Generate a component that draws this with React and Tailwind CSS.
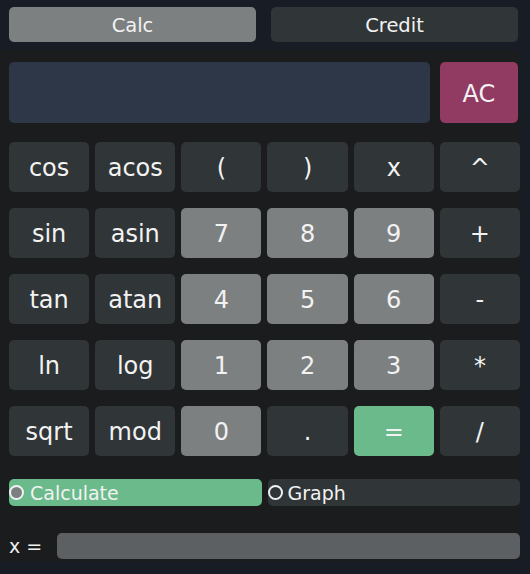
import React from 'react';

const rows = [
  [['cos', 'fn'], ['acos', 'fn'], ['(', 'fn'], [')', 'fn'], ['x', 'fn'], ['^', 'fn']],
  [['sin', 'fn'], ['asin', 'fn'], ['7', 'num'], ['8', 'num'], ['9', 'num'], ['+', 'fn']],
  [['tan', 'fn'], ['atan', 'fn'], ['4', 'num'], ['5', 'num'], ['6', 'num'], ['-', 'fn']],
  [['ln', 'fn'], ['log', 'fn'], ['1', 'num'], ['2', 'num'], ['3', 'num'], ['*', 'fn']],
  [['sqrt', 'fn'], ['mod', 'fn'], ['0', 'num'], ['.', 'fn'], ['=', 'eq'], ['/', 'fn']],
];

const keyStyle = {
  fn: 'bg-[#303537]',
  num: 'bg-[#7c8081]',
  eq: 'bg-[#6bba8b]',
};

const App = () => {
  return (
    <div className="w-[530px] h-[574px] bg-[#181c25] text-[#f2f2f2] flex flex-col overflow-hidden" style={{ fontFamily: '"DejaVu Sans", sans-serif' }}>
      {/* Tabs */}
      <div className="h-[50px] flex pl-[9px] pr-[12px] pt-[7px] gap-[15px]">
        <button className="w-[247px] h-[35px] pt-[3px] rounded-[5px] bg-[#7c8081] text-[19.5px] leading-none">Calc</button>
        <button className="w-[247px] h-[35px] pt-[3px] rounded-[5px] bg-[#303537] text-[19.5px] leading-none">Credit</button>
      </div>

      {/* Main panel */}
      <div className="w-[520px] h-[512px] bg-[#1b1c1e] rounded-r-[6px] pl-[9px] pt-[12px] flex flex-col">
        <div className="flex gap-[10px] pr-[2px] h-[61px]">
          <div className="flex-1 rounded-[5px] bg-[#2e3748]" />
          <button className="w-[78px] pt-[2px] rounded-[5px] bg-[#913a62] text-[24px] leading-none">AC</button>
        </div>

        <div className="grid grid-cols-6 gap-x-[6px] gap-y-[16px] mt-[19px]">
          {rows.flat().map(([label, kind], i) => (
            <button key={i} className={`h-[50px] pt-[2px] rounded-[5px] text-[24px] leading-none ${keyStyle[kind]}`}>
              {label}
            </button>
          ))}
        </div>

        <div className="grid grid-cols-2 gap-[6px] mt-[23px]">
          <div className="h-[27px] rounded-[5px] bg-[#6bba8b] flex items-center gap-[6px]">
            <span className="w-[15px] h-[15px] rounded-full border-2 border-[#f2f2f2] bg-[#7c8081]" />
            <span className="text-[19px] leading-none pt-[1px]">Calculate</span>
          </div>
          <div className="h-[27px] rounded-[5px] bg-[#303537] flex items-center gap-[5px]">
            <span className="w-[15px] h-[15px] rounded-full border-2 border-[#f2f2f2] bg-[#303537]" />
            <span className="text-[19px] leading-none pt-[1px]">Graph</span>
          </div>
        </div>

        <div className="flex items-center mt-[27px] h-[26px]">
          <span className="w-[48px] text-[19px] leading-none">x =</span>
          <div className="flex-1 h-[26px] rounded-[5px] bg-[#5d6062]" />
        </div>
      </div>
    </div>
  );
};

export default App;
